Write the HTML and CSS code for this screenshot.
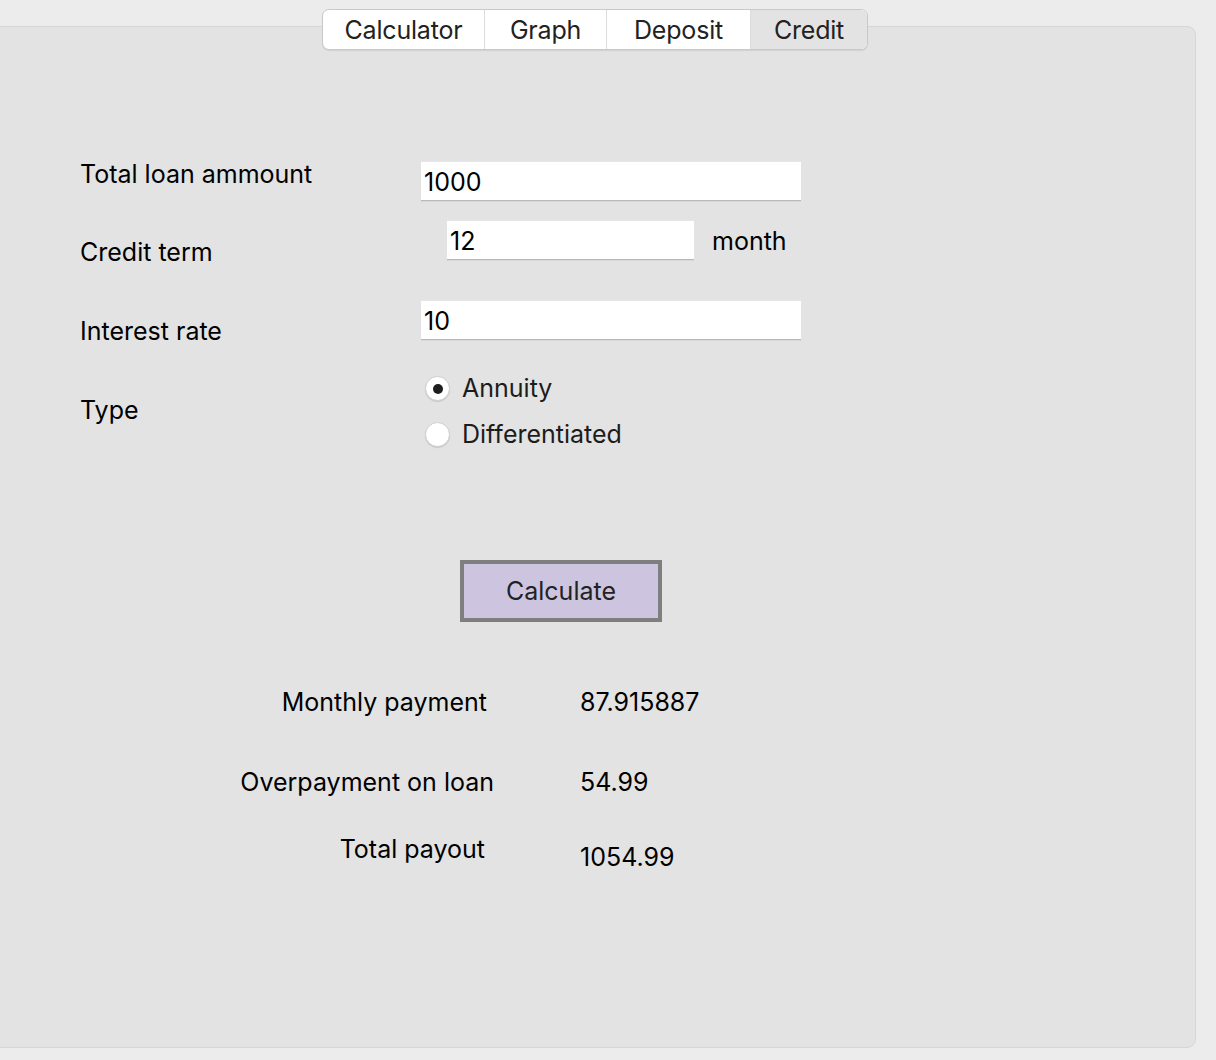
FILE: index.html
```html
<!DOCTYPE html>
<html lang="en">
<head>
<meta charset="utf-8">
<title>Credit calculator</title>
<link rel="stylesheet" href="styles.css">
</head>
<body>
<div class="window">
  <nav class="tabs">
    <div class="tab">Calculator</div>
    <div class="tab">Graph</div>
    <div class="tab">Deposit</div>
    <div class="tab tab-active">Credit</div>
  </nav>
  <main class="panel">
    <section class="form">
      <div class="row row-amount">
        <label class="label">Total loan ammount</label>
        <div class="input input-wide">1000</div>
      </div>
      <div class="row row-term">
        <label class="label">Credit term</label>
        <div class="input input-term">12</div>
        <span class="unit">month</span>
      </div>
      <div class="row row-rate">
        <label class="label">Interest rate</label>
        <div class="input input-wide">10</div>
      </div>
      <div class="row row-type">
        <label class="label">Type</label>
        <div class="radios">
          <div class="radio"><span class="dot dot-on"></span><span>Annuity</span></div>
          <div class="radio"><span class="dot"></span><span>Differentiated</span></div>
        </div>
      </div>
    </section>
    <button class="calc">Calculate</button>
    <section class="results">
      <div class="res res-monthly">
        <span class="res-label">Monthly payment</span>
        <span class="res-value">87.915887</span>
      </div>
      <div class="res res-over">
        <span class="res-label">Overpayment on loan</span>
        <span class="res-value">54.99</span>
      </div>
      <div class="res res-total">
        <span class="res-label">Total payout</span>
        <span class="res-value">1054.99</span>
      </div>
    </section>
  </main>
</div>
</body>
</html>
```

FILE: styles.css
```css
* { box-sizing: border-box; }
html, body {
  margin: 0;
  padding: 0;
  background: #ececec;
  font-family: "Inter", "Liberation Sans", sans-serif;
  color: #000;
  overflow: hidden;
}
.window {
  height: 1060px;
  padding-top: 9px;
}
.tabs {
  position: relative;
  z-index: 2;
  display: flex;
  width: 546px;
  height: 41px;
  margin: 0 0 -24px 322px;
  background: #fff;
  border: 1px solid #c9c9c9;
  border-radius: 7px;
  overflow: hidden;
  box-shadow: 0 1px 1px rgba(0,0,0,0.08);
}
.tab {
  display: flex;
  align-items: center;
  justify-content: center;
  font-size: 25px;
  color: #222;
  border-right: 1px solid #dcdcdc;
  letter-spacing: -0.2px;
}
.tab:nth-child(1) { width: 162px; }
.tab:nth-child(2) { width: 122px; }
.tab:nth-child(3) { width: 144px; }
.tab:nth-child(4) { flex: 1; border-right: none; }
.tab-active { background: #e3e3e3; }

.panel {
  margin-left: -10px;
  width: 1206px;
  height: 1022px;
  background: #e3e3e3;
  border: 1px solid #d6d6d6;
  border-radius: 9px;
  padding: 132px 0 0 89px;
  font-size: 25px;
}
.form { display: flex; flex-direction: column; }
.row { display: flex; align-items: flex-start; }
.label {
  width: 341px;
  flex: none;
  line-height: 31px;
  white-space: nowrap;
}
.input {
  background: #fff;
  height: 40px;
  line-height: 40px;
  padding-left: 3px;
  border-top: 1px solid #e6e6e6;
  border-bottom: 1px solid #b9b9b9;
  box-shadow: 0 1px 0 rgba(0,0,0,0.05);
}
.input-wide { width: 380px; margin-top: 2px; }
.row-amount { height: 41px; }
.row-term { margin-top: 20px; height: 48px; }
.row-term .label { margin-top: 17px; }
.input-term { width: 247px; margin-left: 26px; }
.unit { margin-left: 18px; margin-top: 6px; line-height: 31px; }
.row-rate { margin-top: 32px; height: 47px; }
.row-rate .input-wide { margin-top: 0; }
.row-rate .label { margin-top: 16px; }
.row-type { margin-top: 26px; }
.row-type .label { margin-top: 22px; }
.radios { display: flex; flex-direction: column; gap: 15px; }
.radio {
  display: flex;
  align-items: center;
  gap: 12px;
  line-height: 31px;
  padding-left: 4px;
  color: #1c1c1c;
}
.dot {
  width: 25px;
  height: 25px;
  border-radius: 50%;
  background: #fff;
  border: 1px solid #cfcfcf;
  box-shadow: 0 1px 1px rgba(0,0,0,0.12);
  display: flex;
  align-items: center;
  justify-content: center;
}
.dot-on::after {
  content: "";
  width: 10px;
  height: 10px;
  border-radius: 50%;
  background: #1e1e1e;
}
.calc {
  display: block;
  margin: 110px 0 0 380px;
  width: 202px;
  height: 62px;
  background: #cdc4e0;
  border: 4px solid #7f7f7f;
  font-family: inherit;
  font-size: 25px;
  color: #222;
  padding: 0;
}
.results { display: flex; flex-direction: column; margin-top: 65px; }
.res { display: flex; align-items: flex-start; line-height: 31px; }
.res-label { width: 407px; text-align: right; white-space: nowrap; }
.res-value { margin-left: 93px; }
.res-over { margin-top: 49px; }
.res-over .res-label { width: 414px; }
.res-over .res-value { margin-left: 86px; }
.res-total { margin-top: 36px; }
.res-total .res-label { width: 405px; }
.res-total .res-value { margin-left: 95px; margin-top: 8px; }
```
